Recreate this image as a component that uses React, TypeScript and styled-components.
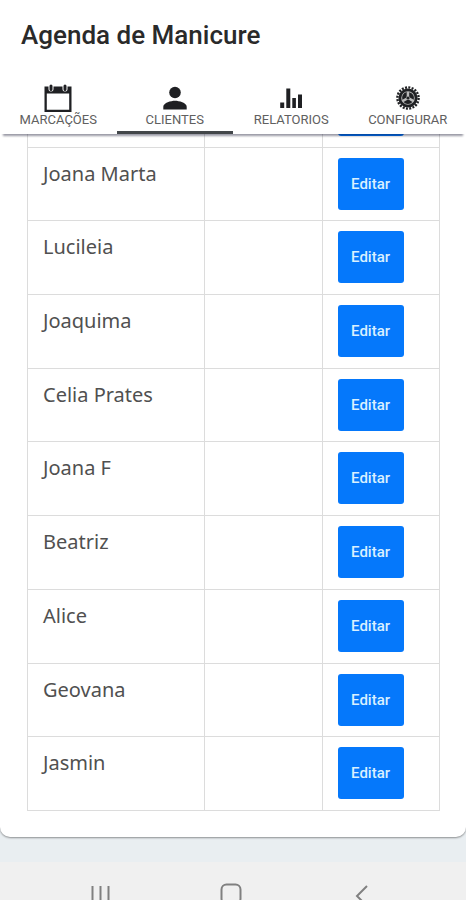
import React from "react";
import styled, { createGlobalStyle } from "styled-components";

const GlobalStyle = createGlobalStyle`
  *, *::before, *::after { box-sizing: border-box; }
  body {
    margin: 0;
    background: #e9eef1;
    font-family: Roboto, "Liberation Sans", sans-serif;
    color: #222;
  }
  button { font: inherit; border: 0; padding: 0; cursor: pointer; }
`;

const Screen = styled.div`
  display: flex;
  flex-direction: column;
  height: 100vh;
  overflow: hidden;
`;

const Header = styled.header`
  position: relative;
  z-index: 1;
  flex: none;
  background: #fff;
  box-shadow: 0 5px 2px -3px rgba(0, 0, 30, 0.4);
`;

const Title = styled.h1`
  margin: 0;
  padding: 19px 21px 0;
  font-size: 26px;
  line-height: 32px;
  font-weight: 500;
  color: #2a2a2a;
`;

const Tabs = styled.nav`
  display: grid;
  grid-template-columns: repeat(4, 1fr);
  padding-top: 33px;
`;

const Tab = styled.button<{ $active?: boolean }>`
  display: flex;
  flex-direction: column;
  align-items: center;
  height: 50px;
  background: none;
  border-bottom: 3px solid ${(p) => (p.$active ? "#43474a" : "transparent")};
  font-size: 13px;
  line-height: 14px;
  color: #606060;
`;

const TabIcon = styled.svg`
  display: block;
  width: 28px;
  height: 29px;
  flex: none;
  color: #1f2023;
`;

const Card = styled.main`
  flex: 1;
  min-height: 0;
  display: flex;
  flex-direction: column;
  justify-content: flex-end;
  overflow: hidden;
  padding: 0 26px 26px 27px;
  background: #fff;
  border-radius: 0 0 10px 10px;
  box-shadow: 0 1px 2px rgba(0, 0, 0, 0.4);
`;

const ClientTable = styled.table`
  flex: none;
  width: 100%;
  height: 738px;
  table-layout: fixed;
  border-collapse: collapse;
`;

const Cell = styled.td<{ $width?: string }>`
  width: ${(p) => p.$width ?? "auto"};
  padding: 10px 15px;
  border: 1px solid #dcdcdc;
  vertical-align: top;
  font-family: "Noto Sans", "Open Sans", sans-serif;
  font-size: 20px;
  line-height: 32px;
  color: #505050;
`;

const EditButton = styled.button`
  display: block;
  width: 66px;
  height: 52px;
  border-radius: 3px;
  background: #0578fb;
  color: #d9f0ff;
  font-family: Roboto, sans-serif;
  font-size: 15px;
  font-weight: 500;
  line-height: 20px;
`;

const SystemBar = styled.footer`
  flex: none;
  display: grid;
  grid-template-columns: repeat(3, 1fr);
  height: 38px;
  margin-top: 25px;
  padding: 20px 39px 0 35px;
  overflow: hidden;
  background: #f0f0f0;
`;

const SystemButton = styled.button`
  display: flex;
  justify-content: center;
  height: 28px;
  background: none;
  color: #808080;
`;

const SystemIcon = styled.svg`
  display: block;
  width: 24px;
  height: 28px;
`;

const CalendarIcon = () => (
  <TabIcon viewBox="0 0 28 29" aria-hidden="true">
    <path fill="currentColor" fillRule="evenodd" d="M0.5 2.5h27V28H0.5zM2.8 9.5v16.3h22.4V9.5z" />
    <path stroke="#fff" strokeWidth="5" strokeLinecap="round" d="M7 2v3M21 2v3" />
    <path stroke="currentColor" strokeWidth="3" strokeLinecap="round" d="M7 2v3.5M21 2v3.5" />
  </TabIcon>
);

const PersonIcon = () => (
  <TabIcon viewBox="0 0 28 29" aria-hidden="true">
    <circle cx="14" cy="8.5" r="5.8" fill="currentColor" />
    <path fill="currentColor" d="M2.3 25.5v-2.8c0-4 7.8-6 11.7-6s11.7 2 11.7 6v2.8z" />
  </TabIcon>
);

const ChartIcon = () => (
  <TabIcon viewBox="0 0 28 29" aria-hidden="true">
    <path fill="currentColor" d="M3.2 18.5h4V24h-4zM9.3 4.5h4V24h-4zM15.3 14h3.6v10h-3.6zM21 10.5h4V24h-4z" />
  </TabIcon>
);

const GearIcon = () => (
  <TabIcon viewBox="0 0 28 29" aria-hidden="true">
    <circle cx="14" cy="14" r="10.6" fill="none" stroke="currentColor" strokeWidth="2.4" strokeDasharray="2 1.33" />
    <circle cx="14" cy="14" r="8.2" fill="#bbb" stroke="currentColor" strokeWidth="2.8" />
    <g fill="currentColor">
      {[0, 120, 240].map((angle) => (
        <path key={angle} transform={`rotate(${angle} 14 14)`} d="M15.2 12.4V8.2a6 6 0 0 1 4.6 7.6l-3.6-2a3 3 0 0 0-1-1.4z" />
      ))}
    </g>
    <circle cx="14" cy="14" r="1.6" fill="currentColor" />
  </TabIcon>
);

const tabs = [
  { label: "MARCAÇÕES", Icon: CalendarIcon },
  { label: "CLIENTES", Icon: PersonIcon, active: true },
  { label: "RELATORIOS", Icon: ChartIcon },
  { label: "CONFIGURAR", Icon: GearIcon },
];

const clients = [
  "",
  "Joana Marta",
  "Lucileia",
  "Joaquima",
  "Celia Prates",
  "Joana F",
  "Beatriz",
  "Alice",
  "Geovana",
  "Jasmin",
];

export default function App() {
  return (
    <>
      <GlobalStyle />
      <Screen>
        <Header>
          <Title>Agenda de Manicure</Title>
          <Tabs>
            {tabs.map(({ label, Icon, active }) => (
              <Tab key={label} type="button" $active={active} aria-current={active ? "page" : undefined}>
                <Icon />
                {label}
              </Tab>
            ))}
          </Tabs>
        </Header>
        <Card>
          <ClientTable>
            <tbody>
              {clients.map((name, i) => (
                <tr key={i}>
                  <Cell $width="43%">{name}</Cell>
                  <Cell />
                  <Cell>
                    <EditButton type="button" aria-label={`Editar ${name}`.trim()}>
                      {name && "Editar"}
                    </EditButton>
                  </Cell>
                </tr>
              ))}
            </tbody>
          </ClientTable>
        </Card>
        <SystemBar>
          <SystemButton type="button" aria-label="Recentes">
            <SystemIcon viewBox="0 0 24 28" aria-hidden="true">
              <path stroke="currentColor" strokeWidth="2" d="M4.5 4v20M12.5 4v20M20.5 4v20" />
            </SystemIcon>
          </SystemButton>
          <SystemButton type="button" aria-label="Início">
            <SystemIcon viewBox="0 0 24 28" aria-hidden="true">
              <rect x="2.5" y="2.5" width="19" height="19" rx="5" fill="none" stroke="currentColor" strokeWidth="2" />
            </SystemIcon>
          </SystemButton>
          <SystemButton type="button" aria-label="Voltar">
            <SystemIcon viewBox="0 0 24 28" aria-hidden="true">
              <path fill="none" stroke="currentColor" strokeWidth="2" d="M17 4L7 14l10 10" />
            </SystemIcon>
          </SystemButton>
        </SystemBar>
      </Screen>
    </>
  );
}
